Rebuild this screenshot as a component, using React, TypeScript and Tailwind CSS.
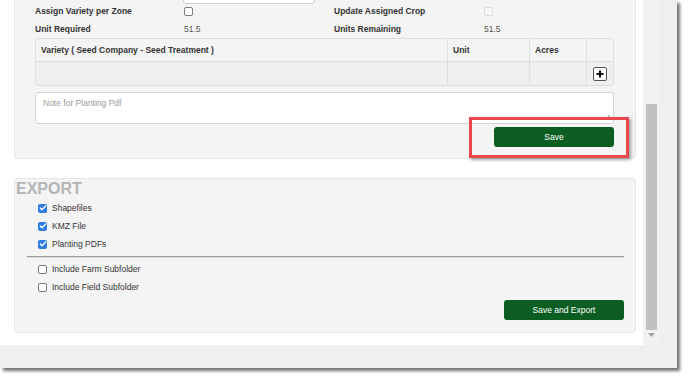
import { Check } from "lucide-react";

const font = { fontFamily: '"Liberation Sans", Arial, sans-serif' };

const Box = ({ checked, disabled }: { checked?: boolean; disabled?: boolean }) => {
  if (checked) {
    return (
      <div className="w-[9px] h-[9px] rounded-[2px] bg-[#2f7de1] flex items-center justify-center shrink-0">
        <Check className="w-[8px] h-[8px] text-white" strokeWidth={4} />
      </div>
    );
  }
  return (
    <div
      className={
        disabled
          ? "w-[9px] h-[9px] rounded-[2px] border border-[#dcdcdc] bg-[#f7f7f7] shrink-0"
          : "w-[9px] h-[9px] rounded-[2px] border border-[#7a7a7a] bg-white shrink-0"
      }
    ></div>
  );
};

const CheckRow = ({ label, checked }: { label: string; checked?: boolean }) => {
  return (
    <div className="h-[18px] flex items-center gap-x-[5px] pl-[23px] text-[8.5px] text-[#333]">
      <Box checked={checked} />
      <span>{label}</span>
    </div>
  );
};

const App = () => {
  return (
    <div className="w-[688px] h-[379px] bg-white overflow-hidden" style={font}>
      <div className="w-[677px] h-[368px] flex flex-col shadow-[3px_3px_3px_rgba(0,0,0,0.55)]">
        <div className="flex h-[345px]">
          {/* content */}
          <div className="w-[643px] h-full bg-white overflow-hidden flex flex-col">
            <div className="ml-[14px] w-[622px] mt-[-24px] bg-[#f4f4f4] border border-[#e6e6e6] rounded-[4px] pb-[11px] relative">
              <div className="h-[28px] pl-[168px] pt-[5px]">
                <div className="w-[132px] h-[22px] bg-white border border-[#cfcfcf] rounded-[3px]"></div>
              </div>
              <div className="grid grid-cols-[149px_150px_150px_1fr] pl-[20px] text-[8.5px]">
                <div className="h-[13px] flex items-center font-bold text-[#333]">Assign Variety per Zone</div>
                <div className="h-[13px] flex items-center">
                  <Box />
                </div>
                <div className="h-[13px] flex items-center font-bold text-[#333]">Update Assigned Crop</div>
                <div className="h-[13px] flex items-center">
                  <Box disabled />
                </div>
                <div className="h-[18px] mt-[2px] flex items-center font-bold text-[#333]">Unit Required</div>
                <div className="h-[18px] mt-[2px] flex items-center text-[#555]">51.5</div>
                <div className="h-[18px] mt-[2px] flex items-center font-bold text-[#333]">Units Remaining</div>
                <div className="h-[18px] mt-[2px] flex items-center text-[#555]">51.5</div>
              </div>

              <div className="ml-[20px] w-[579px] border border-[#dedede] rounded-[3px] overflow-hidden text-[8.5px]">
                <div className="grid grid-cols-[412px_82px_57px_1fr] h-[23px] bg-[#f4f4f4] border-b border-[#dedede] font-bold text-[#333]">
                  <div className="flex items-center pl-[5px] border-r border-[#dedede]">Variety ( Seed Company - Seed Treatment )</div>
                  <div className="flex items-center pl-[5px] border-r border-[#dedede]">Unit</div>
                  <div className="flex items-center pl-[5px] border-r border-[#dedede]">Acres</div>
                  <div></div>
                </div>
                <div className="grid grid-cols-[412px_82px_57px_1fr] h-[23px] bg-[#efefef]">
                  <div className="border-r border-[#dedede]"></div>
                  <div className="border-r border-[#dedede]"></div>
                  <div className="border-r border-[#dedede]"></div>
                  <div className="flex items-center justify-center">
                    <div className="w-[14px] h-[14px] bg-white border border-[#555] rounded-[2px] flex items-center justify-center mt-[1px]">
                      <svg width="10" height="10" viewBox="0 0 10 10">
                        <path d="M5 1.5V8.5M1.5 5H8.5" stroke="#111" strokeWidth="2" />
                      </svg>
                    </div>
                  </div>
                </div>
              </div>

              <div className="ml-[20px] w-[579px] h-[32px] mt-[6px] bg-white border border-[#d4d4d4] rounded-[3px] relative px-[7px] pt-[4px] text-[8.5px] text-[#9a9a9a]">
                Note for Planting Pdf
                <svg className="absolute right-[2px] bottom-[2px]" width="7" height="7" viewBox="0 0 7 7">
                  <path d="M6 1L1 6M6 4L4 6" stroke="#888" strokeWidth="1" />
                </svg>
              </div>

              <div className="flex justify-end pr-[21px] mt-[3px]">
                <div className="w-[120px] h-[20px] bg-[#0b5d22] rounded-[3px] flex items-center justify-center text-white text-[8.5px]">Save</div>
              </div>

              <div className="absolute left-[454px] top-[140px] w-[160px] h-[41px] border-[3px] border-[#e8474c] shadow-[2px_2px_3px_rgba(0,0,0,0.35)]"></div>
            </div>

            <div className="ml-[14px] w-[622px] mt-[19px] h-[155px] bg-[#f4f4f4] border border-[#e6e6e6] rounded-[4px]">
              <div className="pl-[1px] pt-[1px] h-[20px] text-[16px] leading-[18px] font-bold text-[#b5b5b5]">EXPORT</div>
              <div>
                <CheckRow label="Shapefiles" checked />
                <CheckRow label="KMZ File" checked />
                <CheckRow label="Planting PDFs" checked />
              </div>
              <div className="ml-[12px] mr-[11px] mt-[3px] border-t border-[#9c9c9c] border-b border-b-[#dedede]"></div>
              <div className="mt-[2px]">
                <CheckRow label="Include Farm Subfolder" />
                <CheckRow label="Include Field Subfolder" />
              </div>
              <div className="flex justify-end pr-[11px] mt-[4px]">
                <div className="w-[120px] h-[20px] bg-[#0b5d22] rounded-[3px] flex items-center justify-center text-white text-[8.5px]">Save and Export</div>
              </div>
            </div>
          </div>

          {/* scrollbar */}
          <div className="w-[17px] h-full bg-[#f1f1f1] flex flex-col items-center">
            <div className="w-[11px] h-[226px] mt-[104px] bg-[#c1c1c1]"></div>
            <svg className="mt-[3px]" width="7" height="5" viewBox="0 0 7 5">
              <path d="M0 0H7L3.5 4Z" fill="#a3a3a3" />
            </svg>
          </div>
          <div className="flex-1 h-full bg-[#efefef]"></div>
        </div>
        <div className="h-[23px] bg-[#efefef]"></div>
      </div>
    </div>
  );
};

export default App;
